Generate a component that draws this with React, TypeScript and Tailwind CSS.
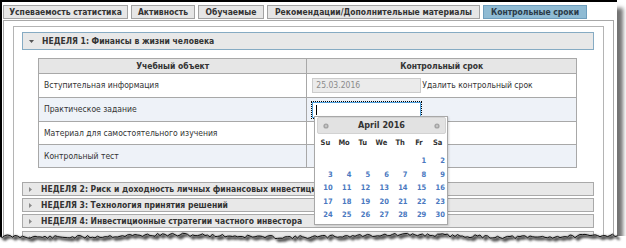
import React from "react";

function tornEdge() {
  let seed = 11;
  const rnd = () => {
    seed = (seed * 9301 + 49297) % 233280;
    return seed / 233280;
  };
  const pts: [number, number][] = [];
  for (let x = 0; x <= 618; x += 2.5) {
    const base = 10 + Math.sin(x / 37) * 1.2;
    pts.push([x, base + (rnd() - 0.5) * 3.2]);
  }
  return pts;
}

const EDGE = tornEdge();

function TornBottom() {
  const line = EDGE.map((p) => `${p[0].toFixed(1)},${p[1].toFixed(1)}`).join(" ");
  const fill = `0,24 ${line} 626,${EDGE[EDGE.length - 1][1].toFixed(1)} 626,24`;
  const band =
    EDGE.map((p) => `${p[0].toFixed(1)},${p[1].toFixed(1)}`).join(" ") +
    " " +
    [...EDGE]
      .reverse()
      .map((p) => `${(p[0] + 3).toFixed(1)},${(p[1] + 3.5).toFixed(1)}`)
      .join(" ");
  return (
    <svg className="absolute left-0 top-[226px]" width="626" height="22" viewBox="0 0 626 22">
      <defs>
        <filter id="b" x="-5%" y="-100%" width="110%" height="300%">
          <feGaussianBlur stdDeviation="1.2" />
        </filter>
      </defs>
      <polygon points={fill} fill="#ffffff" />
      <polygon points={band} fill="#555555" filter="url(#b)" />
      <polyline points={line} fill="none" stroke="#111" strokeWidth="1" />
    </svg>
  );
}

const tabs = [
  { t: "Успеваемость статистика", w: "w-[125px]" },
  { t: "Активность", w: "w-[64px]" },
  { t: "Обучаемые", w: "w-[66px]" },
  { t: "Рекомендации/Дополнительные материалы", w: "w-[213px]" },
];

function Closed({ text, extra }: { text: string; extra: string }) {
  return (
    <div
      className={`${extra} h-[14px] border border-[#a9a9a9] bg-[#e8e8e8] flex items-center pl-[6px] text-[8.5px] leading-none font-bold text-[#333] whitespace-nowrap overflow-hidden`}
    >
      <svg width="4" height="5" viewBox="0 0 4 5" className="mr-[8px] shrink-0">
        <polygon points="0,0 3,2.5 0,5" fill="#8a8a8a" />
      </svg>
      {text}
    </div>
  );
}

const dates: (number | null)[][] = [
  [null, null, null, null, null, 1, 2],
  [3, 4, 5, 6, 7, 8, 9],
  [10, 11, 12, 13, 14, 15, 16],
  [17, 18, 19, 20, 21, 22, 23],
  [24, 25, 26, 27, 28, 29, 30],
];

function Calendar() {
  return (
    <div className="absolute left-[314px] top-[116px] w-[134px] h-[109px] border border-[#a8a8a8] bg-white shadow-[1px_1px_2px_rgba(0,0,0,0.15)]">
      <div className="ml-[2px] mr-[1px] h-[17px] bg-[#e2e2e2] border border-[#d2d2d2] rounded-[2px] flex items-center justify-between px-[5px]">
        <svg width="6" height="6" viewBox="0 0 6 6">
          <circle cx="3" cy="3" r="2.6" fill="#a3a3a3" />
          <circle cx="3" cy="3" r="1.2" fill="#c4c4c4" />
        </svg>
        <span className="text-[9px] leading-none font-bold text-[#333]">April 2016</span>
        <svg width="6" height="6" viewBox="0 0 6 6">
          <circle cx="3" cy="3" r="2.6" fill="#a3a3a3" />
          <circle cx="3" cy="3" r="1.2" fill="#c4c4c4" />
        </svg>
      </div>
      <div className="ml-[1px] w-[131px] mt-[2px] grid grid-cols-7 h-[14px] items-center text-[7.5px] leading-none font-bold text-[#333]">
        {["Su", "Mo", "Tu", "We", "Th", "Fr", "Sa"].map((d) => (
          <div key={d} className="text-center">
            {d}
          </div>
        ))}
      </div>
      <div className="ml-[1px] w-[131px] mt-[4px]">
        {dates.map((row, i) => (
          <div key={i} className="grid grid-cols-7 h-[13.6px] items-center text-[7.5px] leading-none font-bold text-[#4a78c0]">
            {row.map((d, j) => (
              <div key={j} className="text-right pr-[2px]">
                {d ?? ""}
              </div>
            ))}
          </div>
        ))}
      </div>
    </div>
  );
}

export default function App() {
  return (
    <div className="relative w-[626px] h-[248px] bg-white overflow-hidden font-['DejaVu_Sans_Condensed','DejaVu_Sans',sans-serif] text-[#333]">
      <div className="w-[617px] h-[242px] border-l-2 border-t-2 border-black bg-white shadow-[6px_8px_4px_rgba(0,0,0,0.55)] overflow-hidden">
        {/* tabs */}
        <div className="flex gap-[3px] pl-[1px] pt-[3px]">
          {tabs.map((t) => (
            <div
              key={t.t}
              className={`${t.w} h-[14px] border border-[#a3a3a3] bg-[#e6e6e6] flex items-center justify-center text-[8.5px] leading-none font-bold text-[#333] whitespace-nowrap`}
            >
              {t.t}
            </div>
          ))}
          <div className="w-[104px] h-[14px] border border-[#6e9ebd] bg-[#8fbbd4] flex items-center justify-center text-[8.5px] leading-none font-bold text-[#2a3a48] whitespace-nowrap">
            Контрольные сроки
          </div>
        </div>
        {/* panel */}
        <div className="ml-[1px] mt-[1px] w-[611px] h-[240px] border border-[#a8a8a8] pl-[9px] pr-[9px] pt-[5px]">
          <div className="w-[591px] h-[240px] border border-[#b4b4b4] pl-[8px] pr-[9px] pt-[5px]">
            {/* week 1 */}
            <div className="h-[18px] border border-[#86abc3] bg-[#e8e8e8] flex items-center pl-[6px] text-[8.5px] leading-none font-bold text-[#333]">
              <svg width="5" height="3" viewBox="0 0 5 3" className="mr-[8px]">
                <polygon points="0,0 5,0 2.5,3" fill="#555" />
              </svg>
              НЕДЕЛЯ 1: Финансы в жизни человека
            </div>
            <div className="pl-[16px] pr-[16px] pt-[8px] pb-[14px]">
              <table className="w-[539px] border-collapse text-[8.5px] leading-none text-[#333]">
                <colgroup>
                  <col className="w-[269px]" />
                  <col className="w-[270px]" />
                </colgroup>
                <thead>
                  <tr className="h-[15px] bg-[#e6e6e6]">
                    <th className="border border-[#a8a8a8] font-bold p-0">Учебный объект</th>
                    <th className="border border-[#a8a8a8] font-bold p-0">Контрольный срок</th>
                  </tr>
                </thead>
                <tbody>
                  <tr className="h-[24px] bg-white">
                    <td className="border border-[#a8a8a8] pl-[5px]">Вступительная информация</td>
                    <td className="border border-[#a8a8a8] pl-[5px]">
                      <div className="flex items-center">
                        <div className="w-[109px] h-[15px] border border-[#cccccc] bg-[#ebebeb] flex items-center pl-[3px] text-[#8a8a8a]">
                          25.03.2016
                        </div>
                        <span className="ml-[1px]">Удалить контрольный срок</span>
                      </div>
                    </td>
                  </tr>
                  <tr className="h-[24px] bg-[#eef2f8]">
                    <td className="border border-[#a8a8a8] pl-[5px]">Практическое задание</td>
                    <td className="border border-[#a8a8a8] pl-[5px]">
                      <div className="w-[109px] h-[16px] border border-[#4fa0dc] bg-white outline-1 outline-dotted outline-black flex items-center pl-[3px]">
                        <div className="w-[1px] h-[10px] bg-black" />
                      </div>
                    </td>
                  </tr>
                  <tr className="h-[23px] bg-white">
                    <td className="border border-[#a8a8a8] pl-[5px]">Материал для самостоятельного изучения</td>
                    <td className="border border-[#a8a8a8]" />
                  </tr>
                  <tr className="h-[23px] bg-[#eef2f8]">
                    <td className="border border-[#a8a8a8] pl-[5px]">Контрольный тест</td>
                    <td className="border border-[#a8a8a8]" />
                  </tr>
                </tbody>
              </table>
            </div>
            <Closed extra="" text="НЕДЕЛЯ 2: Риск и доходность личных финансовых инвестиций" />
            <Closed extra="mt-[2px]" text="НЕДЕЛЯ 3: Технология принятия решений" />
            <Closed extra="mt-[2px]" text="НЕДЕЛЯ 4: Инвестиционные стратегии частного инвестора" />
            <Closed extra="mt-[3px]" text="" />
          </div>
        </div>
      </div>
      <Calendar />
      <TornBottom />
    </div>
  );
}
